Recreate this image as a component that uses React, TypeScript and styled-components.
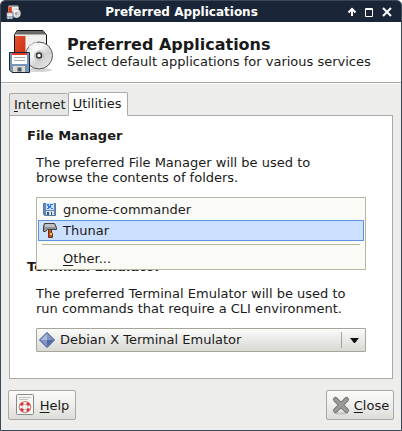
import React from "react";
import styled, { createGlobalStyle } from "styled-components";

const GlobalStyle = createGlobalStyle`
  *, *::before, *::after { box-sizing: border-box; }
  body { margin: 0; background: #fff; }
  body, button, select {
    font-family: "DejaVu Sans", Verdana, sans-serif;
    font-size: 13px;
    line-height: 15px;
    color: #1a1a1a;
  }
`;

const Window = styled.div`
  display: flex;
  flex-direction: column;
  min-height: 100vh;
  border: 1px solid #3a4858;
  border-radius: 5px 5px 0 0;
  background: #ededeb;
  overflow: hidden;
`;

const TitleBar = styled.header`
  display: flex;
  align-items: center;
  height: 21px;
  padding: 0 8px 0 5px;
  background: #1a2637;
  color: #fff;
`;

const TitleText = styled.div`
  flex: 1;
  padding-top: 2px;
  padding-right: 4px;
  text-align: center;
  font-size: 12px;
  font-weight: bold;
`;

const WindowControls = styled.div`
  display: flex;
  gap: 6px;
`;

const ControlButton = styled.button`
  display: block;
  width: 12px;
  height: 12px;
  padding: 0;
  border: 0;
  background: none;

  svg { display: block; }
`;

const Banner = styled.div`
  display: flex;
  align-items: center;
  gap: 11px;
  height: 61px;
  padding: 0 7px 2px;
  border-bottom: 1px solid #a8a89e;
  background: #fff;
  box-shadow: 0 1px #fff;
`;

const BannerCopy = styled.div`
  padding-top: 3px;
`;

const BannerTitle = styled.h1`
  margin: 0;
  font-size: 16px;
  line-height: 18px;
`;

const BannerText = styled.p`
  margin: 0;
  line-height: 16px;
`;

const Body = styled.main`
  display: flex;
  flex: 1;
  flex-direction: column;
  padding: 9px 8px 0;
`;

const TabList = styled.div`
  display: flex;
  align-items: flex-end;
  margin-bottom: -1px;
`;

const Tab = styled.button<{ $active?: boolean }>`
  position: relative;
  height: ${(p) => (p.$active ? 24 : 23)}px;
  margin: 0;
  padding: ${(p) => (p.$active ? "0 5px 2px 4px" : "0 2px 0 4px")};
  border: 1px solid #a9a9a7;
  border-right-width: ${(p) => (p.$active ? 1 : 0)}px;
  border-bottom-color: ${(p) => (p.$active ? "#fff" : "#a9a9a7")};
  border-radius: 2px 2px 0 0;
  background: ${(p) => (p.$active ? "#fff" : "#e6e6e4")};
`;

const Mnemonic = styled.span`
  text-decoration: underline;
  text-decoration-thickness: 1px;
  text-underline-offset: 2px;
  text-decoration-skip-ink: none;
`;

const Panel = styled.section`
  display: flex;
  flex: 1;
  flex-direction: column;
  gap: 38px;
  padding: 12px 26px 26px 17px;
  border: 1px solid #a9a9a7;
  background: #fff;
`;

const Preference = styled.section`
  display: flex;
  flex-direction: column;
  gap: 12px;
`;

const PreferenceTitle = styled.h2`
  margin: 0;
  font-size: 13px;
  line-height: 15px;
`;

const PreferenceText = styled.p`
  margin: 0 0 0 9px;
`;

const ComboBox = styled.div`
  position: relative;
  height: 24px;
  margin-left: 9px;
`;

const ComboIcon = styled.span`
  position: absolute;
  top: 4px;
  left: 3px;

  svg { display: block; }
`;

const ComboArrow = styled.span`
  position: absolute;
  top: 4px;
  right: 7px;
  display: flex;
  align-items: center;
  height: 16px;
  padding-left: 8px;
  border-left: 1px solid #a5a59a;
  pointer-events: none;
`;

const Select = styled.select`
  display: block;
  width: 100%;
  height: 24px;
  padding: 0 32px 2px 23px;
  appearance: none;
  border: 1px solid #a5a599;
  border-radius: 1px;
  background: linear-gradient(#fbfbfa, #e9e9e6 50%, #d9d9d5);
`;

const Menu = styled.ul`
  position: absolute;
  z-index: 1;
  top: 0;
  right: 0;
  left: 0;
  margin: 0;
  padding: 1px 1px 0;
  border: 1px solid #b5b6a1;
  background: #fafaf6;
  list-style: none;
`;

const MenuRow = styled.li`
  display: block;
`;

const MenuButton = styled.button<{ $active?: boolean }>`
  display: flex;
  align-items: center;
  gap: 5px;
  width: 100%;
  height: 21px;
  margin: 0;
  padding: 0 3px;
  border: 1px solid ${(p) => (p.$active ? "#5a96e0" : "transparent")};
  background: ${(p) => (p.$active ? "#cce0ff" : "none")};
  text-align: left;
`;

const MenuIcon = styled.span`
  width: 16px;
  height: 16px;

  svg { display: block; }
`;

const MenuDivider = styled.li`
  height: 1px;
  margin: 3px 4px;
  background: #b5b6a1;
`;

const Footer = styled.footer`
  display: flex;
  justify-content: space-between;
  padding: 11px 7px 10px;
`;

const ActionButton = styled.button`
  display: flex;
  align-items: center;
  justify-content: center;
  gap: 3px;
  height: 30px;
  min-width: 68px;
  margin: 0;
  padding: 0 3px;
  border: 1px solid #a9a9a0;
  border-radius: 2px;
  background: linear-gradient(#fbfbfa, #eeeeec 50%, #dcdcd8);
`;

const PackageIcon = ({ size }: { size: number }) => (
  <svg width={size} height={size} viewBox="0 0 48 48" aria-hidden="true">
    <defs>
      <linearGradient id="disc" x1="0" y1="0" x2="1" y2="1">
        <stop offset="0" stopColor="#c8c8c8" />
        <stop offset=".35" stopColor="#f8f8f8" />
        <stop offset=".6" stopColor="#d2d2d2" />
        <stop offset="1" stopColor="#eee" />
      </linearGradient>
      <linearGradient id="carton" x1="0" y1="0" x2="1" y2="1">
        <stop offset="0" stopColor="#e8502c" />
        <stop offset="1" stopColor="#c02b10" />
      </linearGradient>
    </defs>
    <ellipse cx="30" cy="43" rx="14" ry="2" fill="#000" opacity=".16" />
    <path d="M6.500 8 9 3.500H35L38.500 8V35H6.500Z" fill="#eeeeea" stroke="#111" />
    <path d="M7 7.500 9.500 4H35L38 7.500Z" fill="#686868" />
    <path d="M7 9H18V35H7Z" fill="url(#carton)" />
    <path d="M18 9V34" stroke="#fff" />
    <circle cx="31" cy="28.500" r="13.500" fill="url(#disc)" stroke="#555" />
    <path d="M31 28.500 20 20A14 14 0 0 1 29 15Z" fill="#fff" opacity=".6" />
    <circle cx="31" cy="28.500" r="4.500" fill="#ddd" stroke="#bbb" />
    <circle cx="31" cy="28.500" r="2.500" fill="#fff" stroke="#333" strokeWidth="1.500" />
    <path d="M1.500 25.500H21.500V45.500H4L1.500 43Z" fill="#7595b9" stroke="#15253b" />
    <path d="M4 26H19V37H4Z" fill="#fff" />
    <path d="M4 26H19V28H4Z" fill="#de3a2c" />
    <path d="M6 30.500H17M6 33.500H17" stroke="#aaa" />
    <path d="M5 39H17V45H5Z" fill="#ddd8cb" />
    <path d="M9.500 40.500H13.500V44.500H9.500Z" fill="#4c5970" />
  </svg>
);

const CommanderIcon = () => (
  <svg width="16" height="16" viewBox="0 0 16 16" aria-hidden="true">
    <path d="M1.500 1.500H13.500V13.500H2.500L1.500 12.500Z" fill="#6388b7" stroke="#587aa6" />
    <path d="M4 1H12V8H4Z" fill="#cfe1fb" />
    <path d="M5 2h2v2H5ZM8 2h3v1H9v2H8ZM6 4h3v2H7v1H5V6h1ZM9 6h2v1H9Z" fill="#2978e8" />
    <path d="M4 9H12V13H4Z" fill="#dadfe5" />
    <path d="M5 10h2v3H5ZM9 10h1v3H9Z" fill="#39577f" />
  </svg>
);

const HammerIcon = () => (
  <svg width="16" height="16" viewBox="0 0 16 16" aria-hidden="true">
    <path d="M6.500 6.500H9.500V9L10.500 11V14.500H6.500V11Z" fill="#a86524" stroke="#633713" />
    <path d="M7 8H9V10H7ZM7 12H9V14H7Z" fill="#d9362b" />
    <path d="M8 10H10V12H8Z" fill="#f5c637" />
    <path d="M2.500 .500H12.500L14.500 4.500V6.500H5.500L3.500 8.500H1.500V3.500Z" fill="#929292" stroke="#404040" />
    <path d="M3 1H12L13 4H3Z" fill="#c0c0c0" />
  </svg>
);

const TerminalIcon = () => (
  <svg width="16" height="16" viewBox="0 0 16 16" aria-hidden="true">
    <path d="M8 .500 15.500 8 8 15.500 .500 8Z" fill="#7790c3" stroke="#3d4f7e" />
    <path d="M8 1.500 14.500 8H8Z" fill="#8196c6" />
    <path d="M1.500 8H8V14.500Z" fill="#8196c6" />
    <path d="M8 1.500V8H1.500Z" fill="#a9b9da" />
    <path d="M8 8H14.500L8 14.500Z" fill="#536ba4" />
  </svg>
);

const HelpIcon = () => (
  <svg width="22" height="24" viewBox="0 0 22 24" aria-hidden="true">
    <rect x="1.500" y="1.500" width="17" height="20" rx="1" fill="#f6f6f4" stroke="#888a85" />
    <path d="M4 4.500H16M4 6.500H13" stroke="#c1c1bd" />
    <ellipse cx="10" cy="14" rx="4.500" ry="4" fill="none" stroke="#999" strokeWidth="3.500" />
    <ellipse cx="10" cy="14" rx="4.500" ry="4" fill="none" stroke="#fff" strokeWidth="2.500" />
    <ellipse cx="10" cy="14" rx="4.500" ry="4" fill="none" stroke="#df3030" strokeWidth="2.500" pathLength="8" strokeDasharray="1 1" strokeDashoffset="-.500" />
    <ellipse cx="10" cy="14" rx="5.800" ry="5.300" fill="none" stroke="#dc5555" strokeWidth=".700" />
  </svg>
);

const CrossIcon = () => (
  <svg width="20" height="24" viewBox="0 0 20 24" aria-hidden="true">
    <ellipse cx="10" cy="20.500" rx="7" ry="1.500" fill="#000" opacity=".12" />
    <path d="M4.500 6.500 15.500 17.500M15.500 6.500 4.500 17.500" stroke="#747673" strokeWidth="5" strokeLinecap="round" />
    <path d="M4.500 6.500 15.500 17.500M15.500 6.500 4.500 17.500" stroke="#9b9d9a" strokeWidth="3" strokeLinecap="round" />
  </svg>
);

export default function App() {
  return (
    <>
      <GlobalStyle />
      <Window>
        <TitleBar>
          <PackageIcon size={16} />
          <TitleText>Preferred Applications</TitleText>
          <WindowControls>
            <ControlButton aria-label="Shade">
              <svg width="12" height="12" viewBox="0 0 12 12"><path d="M7 10V3M3.500 6.500 7 3 10.500 6.500" fill="none" stroke="#fff" strokeWidth="2" /></svg>
            </ControlButton>
            <ControlButton aria-label="Maximize">
              <svg width="12" height="12" viewBox="0 0 12 12"><path d="M2.500 2.500H9.500V10.500H2.500ZM2 3.500H10" fill="none" stroke="#fff" /></svg>
            </ControlButton>
            <ControlButton aria-label="Close window">
              <svg width="12" height="12" viewBox="0 0 12 12"><path d="M2 2 10 10M10 2 2 10" stroke="#fff" strokeWidth="2" /></svg>
            </ControlButton>
          </WindowControls>
        </TitleBar>

        <Banner>
          <PackageIcon size={48} />
          <BannerCopy>
            <BannerTitle>Preferred Applications</BannerTitle>
            <BannerText>Select default applications for various services</BannerText>
          </BannerCopy>
        </Banner>

        <Body>
          <TabList role="tablist">
            <Tab role="tab" aria-selected={false}><Mnemonic>I</Mnemonic>nternet</Tab>
            <Tab role="tab" aria-selected $active><Mnemonic>U</Mnemonic>tilities</Tab>
          </TabList>
          <Panel role="tabpanel">
            <Preference>
              <PreferenceTitle>File Manager</PreferenceTitle>
              <PreferenceText>
                The preferred File Manager will be used to<br />browse the contents of folders.
              </PreferenceText>
              <ComboBox>
                <Menu aria-label="File Manager">
                  <MenuRow>
                    <MenuButton><MenuIcon><CommanderIcon /></MenuIcon>gnome-commander</MenuButton>
                  </MenuRow>
                  <MenuRow>
                    <MenuButton $active><MenuIcon><HammerIcon /></MenuIcon>Thunar</MenuButton>
                  </MenuRow>
                  <MenuDivider role="separator" />
                  <MenuRow>
                    <MenuButton><MenuIcon /><span><Mnemonic>O</Mnemonic>ther...</span></MenuButton>
                  </MenuRow>
                </Menu>
              </ComboBox>
            </Preference>

            <Preference>
              <PreferenceTitle><label htmlFor="terminal">Terminal Emulator</label></PreferenceTitle>
              <PreferenceText>
                The preferred Terminal Emulator will be used to<br />run commands that require a CLI environment.
              </PreferenceText>
              <ComboBox>
                <Select id="terminal" defaultValue="debian">
                  <option value="debian">Debian X Terminal Emulator</option>
                  <option value="other">Other...</option>
                </Select>
                <ComboIcon><TerminalIcon /></ComboIcon>
                <ComboArrow>
                  <svg width="9" height="5" viewBox="0 0 9 5" aria-hidden="true"><path d="M0 0H9L5 5H4Z" fill="#111" /></svg>
                </ComboArrow>
              </ComboBox>
            </Preference>
          </Panel>
        </Body>

        <Footer>
          <ActionButton><HelpIcon /><span><Mnemonic>H</Mnemonic>elp</span></ActionButton>
          <ActionButton><CrossIcon /><span><Mnemonic>C</Mnemonic>lose</span></ActionButton>
        </Footer>
      </Window>
    </>
  );
}
